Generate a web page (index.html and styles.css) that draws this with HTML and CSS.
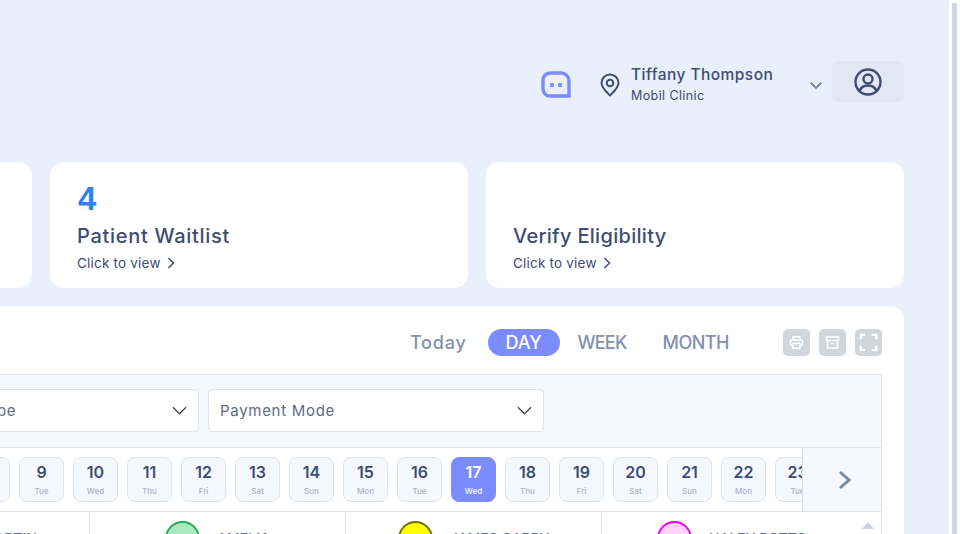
FILE: index.html

```html
<!DOCTYPE html>
<html lang="en">
<head>
  <meta charset="UTF-8" />
  <title>Scheduler</title>
  <meta name="viewport" content="width=device-width, initial-scale=1.0" />
  <link rel="stylesheet" href="styles.css">
</head>
<body>

  <div class="page">
    <div class="topbar">
      <svg class="chat-icon" width="30" height="27" viewBox="0 0 30 27">
        <path d="M9 2h11a8 8 0 0 1 8 8v15H9a7 7 0 0 1-7-7V9a7 7 0 0 1 7-7z" fill="none" stroke="#7a8cff" stroke-width="3.4"/>
        <rect x="9" y="12" width="4" height="4" rx="1" fill="#7a8cff"/>
        <rect x="17" y="12" width="4" height="4" rx="1" fill="#7a8cff"/>
      </svg>
      <svg class="pin-icon" width="20" height="24" viewBox="0 0 20 24">
        <path d="M10 22.5C6 18.500 1.500 14.500 1.500 10a8.500 8.500 0 0 1 17 0c0 4.500-4.500 8.500-8.500 12.500z" fill="none" stroke="#3e4c74" stroke-width="2" stroke-linejoin="round"/>
        <circle cx="10" cy="10" r="3.300" fill="none" stroke="#3e4c74" stroke-width="2"/>
      </svg>
      <div class="who">
        <div class="who-name">Tiffany Thompson</div>
        <div class="who-place">Mobil Clinic</div>
      </div>
      <svg class="who-caret" width="14" height="9" viewBox="0 0 14 9">
        <path d="M1.500 1.500L7 7l5.500-5.500" fill="none" stroke="#7f8db0" stroke-width="2"/>
      </svg>
      <div class="user-box">
        <svg width="28" height="28" viewBox="0 0 28 28">
          <circle cx="14" cy="14" r="12.500" fill="none" stroke="#3e4c74" stroke-width="2.400"/>
          <circle cx="14" cy="11" r="4.500" fill="none" stroke="#3e4c74" stroke-width="2.400"/>
          <path d="M5.500 23c1.500-4 4.500-5.500 8.500-5.500s7 1.500 8.500 5.500" fill="none" stroke="#3e4c74" stroke-width="2.400"/>
        </svg>
      </div>
    </div>

    <div class="cards">
      <div class="card"></div>
      <div class="card">
        <div class="card-num">4</div>
        <div class="card-title card-title-wide">Patient Waitlist</div>
        <div class="card-link">Click to view
          <svg width="8" height="12" viewBox="0 0 8 12"><path d="M1.500 1L6.500 6l-5 5" fill="none" stroke="#3e4c74" stroke-width="1.500"/></svg>
        </div>
      </div>
      <div class="card">
        <div class="card-num"></div>
        <div class="card-title">Verify Eligibility</div>
        <div class="card-link">Click to view
          <svg width="8" height="12" viewBox="0 0 8 12"><path d="M1.500 1L6.500 6l-5 5" fill="none" stroke="#3e4c74" stroke-width="1.500"/></svg>
        </div>
      </div>
    </div>

    <div class="panel">
      <div class="toolbar">
        <span class="tab-today">Today</span>
        <span class="tab tab-on">DAY</span>
        <span class="tab tab-week">WEEK</span>
        <span class="tab tab-month">MONTH</span>
        <div class="tools">
          <div class="tool">
            <svg width="15" height="15" viewBox="0 0 15 15" fill="none" stroke="#fff" stroke-width="1.500">
              <path d="M4 5V1.800h7V5"/>
              <rect x="1.500" y="5" width="12" height="5.500" rx="1.500"/>
              <rect x="4" y="8.500" width="7" height="4.700" fill="#d1d5dc"/>
            </svg>
          </div>
          <div class="tool">
            <svg width="15" height="15" viewBox="0 0 15 15" fill="none" stroke="#fff" stroke-width="1.500">
              <rect x="1.500" y="2" width="12" height="3.500"/>
              <path d="M2.500 5.500v7.500h10V5.500M5.500 8.500h4"/>
            </svg>
          </div>
          <div class="tool">
            <svg width="19" height="19" viewBox="0 0 21 21" fill="none" stroke="#fff" stroke-width="2.600">
              <path d="M2 7V2h5M14 2h5v5M19 14v5h-5M7 19H2v-5"/>
            </svg>
          </div>
        </div>
      </div>

      <div class="sched">
        <div class="filters">
          <div class="select">Appointment Type
            <svg width="15" height="9" viewBox="0 0 16 9"><path d="M1 1l7 7 7-7" fill="none" stroke="#444" stroke-width="1.300"/></svg>
          </div>
          <div class="select">Payment Mode
            <svg width="15" height="9" viewBox="0 0 16 9"><path d="M1 1l7 7 7-7" fill="none" stroke="#444" stroke-width="1.300"/></svg>
          </div>
        </div>

        <div class="dates">
          <div class="date-scroll">
            <div class="chip"><b>2</b><span>Tue</span></div>
            <div class="chip"><b>3</b><span>Wed</span></div>
            <div class="chip"><b>4</b><span>Thu</span></div>
            <div class="chip"><b>5</b><span>Fri</span></div>
            <div class="chip"><b>6</b><span>Sat</span></div>
            <div class="chip"><b>7</b><span>Sun</span></div>
            <div class="chip"><b>8</b><span>Mon</span></div>
            <div class="chip"><b>9</b><span>Tue</span></div>
            <div class="chip"><b>10</b><span>Wed</span></div>
            <div class="chip"><b>11</b><span>Thu</span></div>
            <div class="chip"><b>12</b><span>Fri</span></div>
            <div class="chip"><b>13</b><span>Sat</span></div>
            <div class="chip"><b>14</b><span>Sun</span></div>
            <div class="chip"><b>15</b><span>Mon</span></div>
            <div class="chip"><b>16</b><span>Tue</span></div>
            <div class="chip chip-on"><b>17</b><span>Wed</span></div>
            <div class="chip"><b>18</b><span>Thu</span></div>
            <div class="chip"><b>19</b><span>Fri</span></div>
            <div class="chip"><b>20</b><span>Sat</span></div>
            <div class="chip"><b>21</b><span>Sun</span></div>
            <div class="chip"><b>22</b><span>Mon</span></div>
            <div class="chip"><b>23</b><span>Tue</span></div>
            <div class="chip"><b>24</b><span>Wed</span></div>
          </div>
          <div class="date-next">
            <svg width="14" height="20" viewBox="0 0 14 20"><path d="M2 2l9 8-9 8" fill="none" stroke="#7a88ac" stroke-width="3"/></svg>
          </div>
        </div>

        <div class="providers">
          <div class="provider"><div class="avatar avatar-blue">JM</div><div class="provider-name">JOHN MARTIN</div></div>
          <div class="provider"><div class="avatar avatar-green">A</div><div class="provider-name">AMELIA</div></div>
          <div class="provider"><div class="avatar avatar-yellow">JG</div><div class="provider-name">JAMES GARRY</div></div>
          <div class="provider provider-last"><div class="avatar avatar-pink">HP</div><div class="provider-name">HALEY POTTS</div></div>
          <div class="scroll-up"></div>
        </div>
      </div>
    </div>
  </div>

  <div class="scrollbar"></div>

</body>
</html>
```

FILE: styles.css

```css
html, body {
  height: 100%;
}
body {
  margin: 0;
  display: flex;
  overflow: hidden;
  background: #fff;
  font-family: Inter, "Noto Sans", sans-serif;
  color: #3e4c74;
}
.page {
  width: 949px;
  flex-shrink: 0;
  height: 534px;
  overflow: hidden;
  background: #e9f0fb;
  display: flex;
  flex-direction: column;
  align-items: flex-end;
}
.scrollbar {
  width: 5px;
  margin: 3px 0 0 3px;
  background: #cdd5ea;
}

/* top bar */
.topbar {
  display: flex;
  align-items: center;
  height: 41px;
  margin: 61px 45px 60px 0;
}
.chat-icon {
  margin-right: 29px;
  margin-top: 6px;
}
.pin-icon {
  margin-right: 11px;
  margin-top: 6px;
}
.who {
  width: 178px;
}
.who-name {
  font-size: 15.500px;
  font-weight: 500;
  letter-spacing: .45px;
  line-height: 24px;
  margin-top: 4px;
}
.who-place {
  font-size: 12.500px;
  font-weight: 400;
  letter-spacing: .4px;
  line-height: 18px;
}
.who-caret {
  margin-right: 9px;
  margin-top: 8px;
}
.user-box {
  width: 72px;
  height: 41px;
  background: #e2e8f3;
  border-radius: 5px;
  display: flex;
  align-items: center;
  justify-content: center;
}

/* cards */
.cards {
  display: flex;
  gap: 18px;
  margin-right: 45px;
  margin-bottom: 18px;
}
.card {
  width: 418px;
  height: 126px;
  box-sizing: border-box;
  flex-shrink: 0;
  padding: 20px 27px 0;
  background: #fff;
  border-radius: 14px;
}
.card-num {
  height: 34px;
  margin-left: 1px;
  font-family: "Liberation Sans", sans-serif;
  font-size: 33px;
  font-weight: 700;
  line-height: 34px;
  color: #3381f0;
}
.card-title {
  margin-top: 6px;
  font-size: 20px;
  font-weight: 500;
  letter-spacing: .3px;
  line-height: 28px;
}
.card-title-wide {
  letter-spacing: .7px;
}
.card-link {
  display: flex;
  align-items: center;
  gap: 6px;
  margin-top: 3px;
  font-size: 13.500px;
  font-weight: 400;
  letter-spacing: .2px;
  line-height: 20px;
}

/* schedule panel */
.panel {
  width: 1290px;
  flex-shrink: 0;
  box-sizing: border-box;
  height: 240px;
  margin-right: 45px;
  padding: 0 22px;
  background: #fff;
  border-radius: 14px 14px 0 0;
}
.toolbar {
  display: flex;
  align-items: center;
  justify-content: flex-end;
  height: 68px;
  padding-top: 5px;
  box-sizing: border-box;
  font-size: 18px;
  font-weight: 500;
  color: #8390ae;
}
.tab-today {
  margin-right: 21px;
  letter-spacing: .8px;
}
.tab {
  text-align: center;
}
.tab-on {
  width: 72px;
  height: 27px;
  line-height: 27px;
  border-radius: 14px;
  background: #7a8cff;
  color: #fff;
}
.tab-week {
  margin-left: 18px;
  letter-spacing: -.8px;
}
.tab-month {
  margin-left: 36px;
  letter-spacing: -.5px;
}
.tools {
  display: flex;
  gap: 9px;
  margin-left: 54px;
}
.tool {
  width: 27px;
  height: 27px;
  border-radius: 5px;
  background: #d1d5dc;
  display: flex;
  align-items: center;
  justify-content: center;
}

.sched {
  border: 1px solid #dfe1e8;
  border-bottom: 0;
}
.filters {
  display: flex;
  gap: 9px;
  height: 73px;
  box-sizing: border-box;
  padding: 14px 0 0 226px;
  background: #f5f8fe;
  border-bottom: 1px solid #dfe1e8;
}
.select {
  width: 336px;
  height: 43px;
  box-sizing: border-box;
  display: flex;
  align-items: center;
  justify-content: space-between;
  padding: 0 11px 0 11px;
  background: #fff;
  border: 1px solid #dfe3ec;
  border-radius: 4px;
  font-size: 15px;
  letter-spacing: .7px;
  color: #5d6a8a;
}

/* date strip */
.dates {
  display: flex;
  height: 64px;
  box-sizing: border-box;
  border-bottom: 1px solid #dfe1e8;
}
.date-scroll {
  flex: 1;
  display: flex;
  gap: 9px;
  overflow: hidden;
  padding: 9px 0 0 4px;
}
.chip {
  width: 45px;
  height: 45px;
  flex-shrink: 0;
  box-sizing: border-box;
  background: #f5f8fe;
  border: 1px solid #dfe3ec;
  border-radius: 8px;
  text-align: center;
}
.chip b {
  display: block;
  margin-top: 2px;
  font-size: 16px;
  font-weight: 600;
  line-height: 25px;
}
.chip span {
  display: block;
  font-size: 8px;
  font-weight: 500;
  line-height: 12px;
  color: #aab3cc;
}
.chip-on {
  background: #7a8cff;
  border-color: #7a8cff;
}
.chip-on b, .chip-on span {
  color: #fff;
}
.date-next {
  width: 79px;
  flex-shrink: 0;
  box-sizing: border-box;
  padding-left: 6px;
  display: flex;
  align-items: center;
  justify-content: center;
  background: #f5f8fe;
  border-left: 1px solid #dfe1e8;
}

/* provider columns */
.providers {
  position: relative;
  display: flex;
  justify-content: flex-end;
}
.provider {
  width: 256px;
  height: 40px;
  box-sizing: border-box;
  display: flex;
  align-items: flex-start;
  justify-content: center;
  gap: 17px;
  padding-top: 9px;
  border-right: 1px solid #dfe1e8;
}
.provider-last {
  width: 279px;
  padding-right: 20px;
  border-right: 0;
}
.avatar {
  width: 35px;
  height: 35px;
  box-sizing: border-box;
  flex-shrink: 0;
  border-radius: 50%;
  border: 2px solid;
  text-align: center;
  font-size: 12px;
  line-height: 31px;
}
.avatar-blue {
  background: #c6d5fb;
  border-color: #3381f0;
}
.avatar-green {
  background: #a9ebc1;
  border-color: #27a85a;
  color: #27a85a;
}
.avatar-yellow {
  background: #ffff00;
  border-color: #6e6e10;
}
.avatar-pink {
  background: #fbd3fb;
  border-color: #ee00ee;
  color: #ee00ee;
}
.provider-name {
  margin-top: 8px;
  font-size: 14px;
  font-weight: 500;
  line-height: 20px;
  white-space: nowrap;
  color: #5d6a8a;
}
.scroll-up {
  position: absolute;
  top: 10px;
  right: 7px;
  width: 0;
  height: 0;
  border-left: 6px solid transparent;
  border-right: 6px solid transparent;
  border-bottom: 7px solid #c9d2e8;
}
```
